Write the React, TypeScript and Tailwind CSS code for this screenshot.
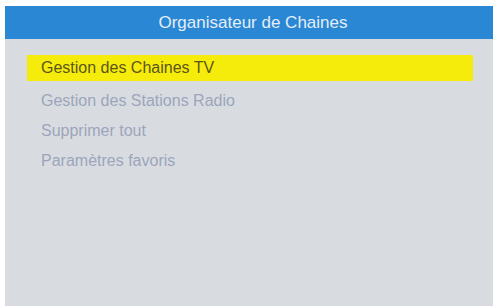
import React from 'react';

const items = [
    'Gestion des Chaines TV',
    'Gestion des Stations Radio',
    'Supprimer tout',
    'Paramètres favoris',
];

export default function App() {
    const selected = 0;

    return (
        <div className="w-[496px] h-[306px] bg-white pt-[6px] pl-[5px] pr-[3px] overflow-hidden" style={{ fontFamily: '"Liberation Sans", Arial, sans-serif' }}>
            <div className="flex flex-col h-full">
                <div className="h-[33px] bg-[#2a87d4] flex items-center justify-center text-[17px] text-[#e4eef8] pl-[8px]">
                    Organisateur de Chaines
                </div>
                <div className="flex-1 bg-[#d8dce1] pt-[16px] pl-[22px] pr-[20px]">
                    <div className="flex flex-col gap-[4px]">
                        {items.map((label, i) => (
                            <div
                                key={label}
                                className={
                                    i === selected
                                        ? 'h-[26px] mb-[3px] bg-[#f6ec0c] text-[#5b5517] flex items-center pl-[14px] text-[16px]'
                                        : 'h-[26px] text-[#9ca5bb] flex items-center pl-[14px] text-[16px]'
                                }
                            >
                                {label}
                            </div>
                        ))}
                    </div>
                </div>
            </div>
        </div>
    );
}
